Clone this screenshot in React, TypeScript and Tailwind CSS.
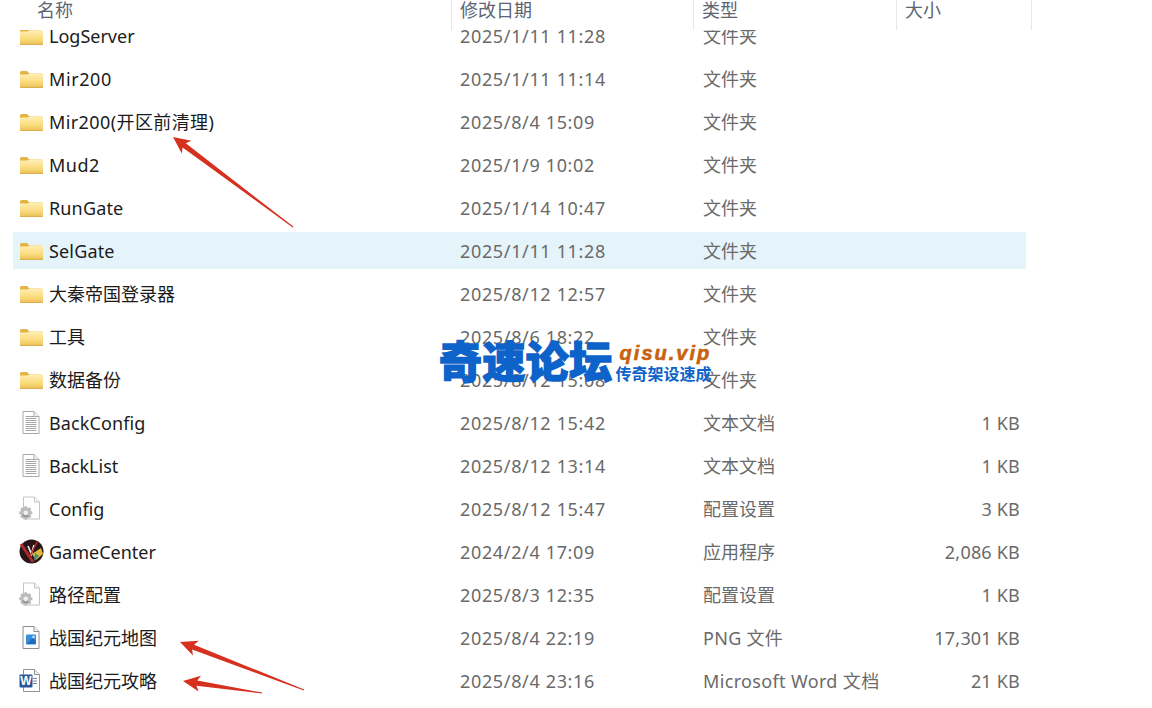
import React from "react";

const CJK = "font-['Noto_Sans','Noto_Sans_CJK_SC',sans-serif]";

function Folder() {
  return (
    <svg width="25" height="20" viewBox="0 0 25 20" className="shrink-0">
      <defs>
        <linearGradient id="fb" x1="0" y1="0" x2="0" y2="1">
          <stop offset="0" stopColor="#fff0b8" />
          <stop offset="0.55" stopColor="#fbdc80" />
          <stop offset="1" stopColor="#edc158" />
        </linearGradient>
      </defs>
      <path d="M1 3.5 Q1 2 2.5 2 H8 L10.5 4.5 H23 V8 H1 Z" fill="#e3b445" />
      <path d="M1 5.5 H8.5 L10.5 4.5 H24 V18 Q24 19 23 19 H2 Q1 19 1 18 Z" fill="url(#fb)" />
      <path d="M1 18.4 H24" stroke="#d9ad4b" strokeWidth="1" />
    </svg>
  );
}

function DocFrame({ children, stroke = "#a9a9a9" }: { children?: React.ReactNode; stroke?: string }) {
  return (
    <>
      <path d="M3.5 1.5 H14.5 L19.5 6.5 V23.5 H3.5 Z" fill="#fff" stroke={stroke} strokeWidth="1" />
      <path d="M14.5 1.5 V6.5 H19.5" fill="#f2f2f2" stroke={stroke} strokeWidth="1" />
      {children}
    </>
  );
}

function TextDoc() {
  return (
    <svg width="25" height="25" viewBox="0 0 25 25" className="shrink-0">
      <g transform="translate(0.5 0)">
        <DocFrame />
        {[6, 8, 10, 12, 14, 16, 18, 20].map((y) => (
          <path key={y} d={`M6 ${y + 0.5} H17`} stroke="#a6a6a6" strokeWidth="1" />
        ))}
      </g>
    </svg>
  );
}

function GearDoc() {
  return (
    <svg width="25" height="25" viewBox="0 0 25 25" className="shrink-0">
      <g transform="translate(1 -0.5)">
        <DocFrame stroke="#c4c4c4" />
      </g>
      <g fill="#bcbcbc">
        <circle cx="6.8" cy="16.8" r="5.2" />
        {[0, 45, 90, 135].map((a) => (
          <rect key={a} x="5.3" y="10.2" width="3" height="13.2" rx="0.6" transform={`rotate(${a} 6.8 16.8)`} />
        ))}
        <circle cx="6.8" cy="16.8" r="2.4" fill="#efefef" />
        <path d="M3 19 A5 5 0 0 0 10 20.5 L8.5 18.5 A2.6 2.6 0 0 1 4.6 18 Z" fill="#979797" />
      </g>
    </svg>
  );
}

function PngDoc() {
  return (
    <svg width="25" height="25" viewBox="0 0 25 25" className="shrink-0">
      <g transform="translate(0.5 0)">
        <DocFrame stroke="#8a8f96" />
        <rect x="6.5" y="9.5" width="10" height="10" rx="1" fill="#3a8fdc" />
        <path d="M7 19 L13 13 L16.5 16 V19 Z" fill="#1f6cb8" />
        <circle cx="14" cy="12" r="1.3" fill="#cfe8fb" />
      </g>
    </svg>
  );
}

function WordDoc() {
  return (
    <svg width="25" height="25" viewBox="0 0 25 25" className="shrink-0">
      <g transform="translate(1 0)">
        <DocFrame stroke="#8f959c" />
        <path d="M13 10.5 H17 M13 13 H17 M13 15.5 H17" stroke="#7f8a96" strokeWidth="1" />
      </g>
      <rect x="0.5" y="6.5" width="13" height="13" rx="1" fill="#2b579a" />
      <text x="7" y="17" textAnchor="middle" fill="#fff" fontSize="12" fontWeight="700" fontFamily="Liberation Sans, sans-serif">
        W
      </text>
    </svg>
  );
}

function GameIcon() {
  return (
    <svg width="25" height="25" viewBox="0 0 25 25" className="shrink-0">
      <circle cx="12.5" cy="12.5" r="12" fill="#2a1618" />
      <path d="M2 5 L14 23" stroke="#a82a2c" strokeWidth="3" />
      <path d="M9 7 L12.5 15 L15 6" stroke="#f1f1f1" strokeWidth="1.6" fill="none" />
      <path d="M13 15 L22 9 L24 15 L17 21 Z" fill="#e0b73a" />
      <path d="M16 14 L20 17 L15 22 Z" fill="#3f8f8a" />
      <path d="M18 3 L11 17" stroke="#b52d2d" strokeWidth="1.5" />
    </svg>
  );
}

type Row = {
  icon: React.ReactNode;
  name: string;
  date: string;
  type: string;
  size?: string;
  active?: boolean;
  nameClass?: string;
  typeClass?: string;
};

const rows: Row[] = [
  { icon: <Folder />, name: "LogServer", date: "2025/1/11 11:28", type: "文件夹" },
  { icon: <Folder />, name: "Mir200", date: "2025/1/11 11:14", type: "文件夹", nameClass: "tracking-[0.6px]" },
  { icon: <Folder />, name: "Mir200(开区前清理)", date: "2025/8/4 15:09", type: "文件夹", nameClass: "tracking-[0.4px]" },
  { icon: <Folder />, name: "Mud2", date: "2025/1/9 10:02", type: "文件夹", nameClass: "tracking-[0.5px]" },
  { icon: <Folder />, name: "RunGate", date: "2025/1/14 10:47", type: "文件夹", nameClass: "tracking-[0.15px]" },
  { icon: <Folder />, name: "SelGate", date: "2025/1/11 11:28", type: "文件夹", active: true, nameClass: "tracking-[0.15px]" },
  { icon: <Folder />, name: "大秦帝国登录器", date: "2025/8/12 12:57", type: "文件夹" },
  { icon: <Folder />, name: "工具", date: "2025/8/6 18:22", type: "文件夹" },
  { icon: <Folder />, name: "数据备份", date: "2025/8/12 15:08", type: "文件夹" },
  { icon: <TextDoc />, name: "BackConfig", date: "2025/8/12 15:42", type: "文本文档", size: "1 KB", nameClass: "tracking-[0.1px]" },
  { icon: <TextDoc />, name: "BackList", date: "2025/8/12 13:14", type: "文本文档", size: "1 KB" },
  { icon: <GearDoc />, name: "Config", date: "2025/8/12 15:47", type: "配置设置", size: "3 KB" },
  { icon: <GameIcon />, name: "GameCenter", date: "2024/2/4 17:09", type: "应用程序", size: "2,086 KB" },
  { icon: <GearDoc />, name: "路径配置", date: "2025/8/3 12:35", type: "配置设置", size: "1 KB" },
  { icon: <PngDoc />, name: "战国纪元地图", date: "2025/8/4 22:19", type: "PNG 文件", size: "17,301 KB", typeClass: "tracking-[0.3px]" },
  { icon: <WordDoc />, name: "战国纪元攻略", date: "2025/8/4 23:16", type: "Microsoft Word 文档", size: "21 KB", typeClass: "tracking-[0.35px]" },
];

function Arrow({ x1, y1, x2, y2 }: { x1: number; y1: number; x2: number; y2: number }) {
  const dx = x2 - x1;
  const dy = y2 - y1;
  const len = Math.hypot(dx, dy);
  const ux = dx / len;
  const uy = dy / len;
  const nx = -uy;
  const ny = ux;
  const p = (along: number, off: number) => `${x1 + ux * along + nx * off},${y1 + uy * along + ny * off}`;
  const head = 17;
  const pts = [
    p(0, 0.5),
    p(len - head + 3, 2.6),
    p(len - head, 8),
    `${x2},${y2}`,
    p(len - head, -8),
    p(len - head + 3, -2.6),
    p(0, -0.5),
  ].join(" ");
  return <polygon points={pts} fill="#d6301f" />;
}

export default function App() {
  return (
    <div className={`relative w-[1152px] h-[708px] overflow-hidden bg-white ${CJK}`}>
      <div className="relative z-10 flex h-[30px] bg-white text-[18px] leading-[20px] text-[#5b6573]">
        <div className="w-[452px] border-r border-[#e6e6e6] pl-[37px]">名称</div>
        <div className="w-[242px] border-r border-[#e6e6e6] pl-[8px]">修改日期</div>
        <div className="w-[203px] border-r border-[#e6e6e6] pl-[8px]">类型</div>
        <div className="w-[135px] border-r border-[#e6e6e6] pl-[8px]">大小</div>
      </div>
      <div className="-mt-[13px] ml-[13px] flex w-[1013px] flex-col gap-[6px]">
        {rows.map((r) => (
          <div
            key={r.name}
            className={`grid h-[37px] shrink-0 grid-cols-[447px_243px_1fr] items-center text-[18px] leading-[24px] ${
              r.active ? "bg-[#e5f3fb]" : ""
            }`}
          >
            <div className="flex items-center gap-[5px] pl-[6px] text-[#1b1b1b]">
              {r.icon}
              <span className={`whitespace-nowrap ${r.nameClass ?? ""}`}>{r.name}</span>
            </div>
            <div className="tracking-[0.65px] text-[#6a6a6a]">{r.date}</div>
            <div className="flex justify-between whitespace-nowrap pr-[6px] text-[#6a6a6a]">
              <span className={r.typeClass}>{r.type}</span>
              <span className="tracking-[0.2px]">{r.size}</span>
            </div>
          </div>
        ))}
      </div>

      <svg className="absolute left-0 top-0 z-20" width="1152" height="708" viewBox="0 0 1152 708">
        <Arrow x1={293} y1={227} x2={173} y2={137} />
        <Arrow x1={304} y1={690} x2={180} y2={642} />
        <Arrow x1={262} y1={693} x2={183} y2={681} />
      </svg>

      <div className="absolute left-[439px] top-[336px] z-30 flex items-start">
        <div className="font-['Noto_Sans_CJK_SC',sans-serif] text-[43px] font-black leading-[46px] tracking-[0.4px] text-[#0d63c9] whitespace-nowrap [-webkit-text-stroke:1.4px_#0d63c9]">
          奇速论坛
        </div>
        <div className="ml-[3px] flex flex-col">
          <div className="ml-[4px] mt-[8px] font-['Liberation_Sans',sans-serif] text-[20px] font-bold italic leading-[18px] tracking-[2px] text-[#c8620f] [-webkit-text-stroke:0.6px_#c8620f]">
            qisu.vip
          </div>
          <div className="mt-[2px] whitespace-nowrap font-['Noto_Sans_CJK_SC',sans-serif] text-[16px] font-bold leading-[18px] text-[#0d63c9]">
            传奇架设速成
          </div>
        </div>
      </div>
    </div>
  );
}
